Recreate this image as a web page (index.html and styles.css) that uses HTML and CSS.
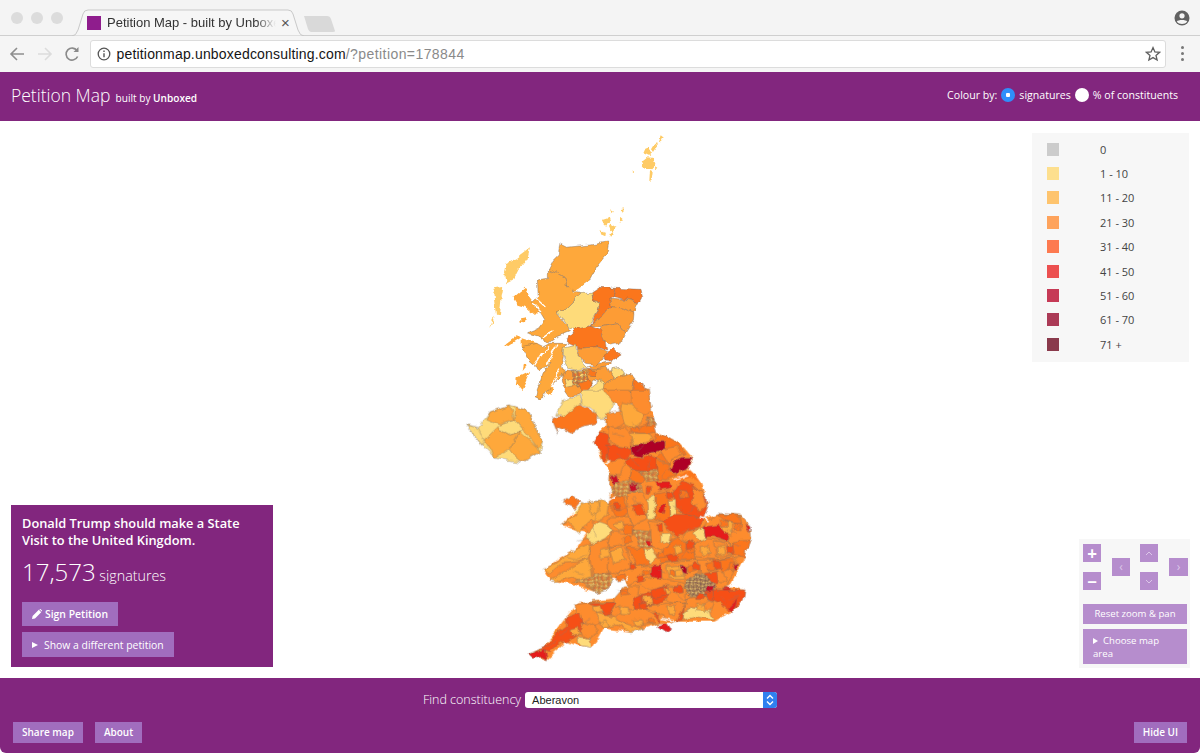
FILE: index.html
```html
<!DOCTYPE html>
<html lang="en">
<head>
<meta charset="utf-8">
<title>Petition Map - built by Unboxed</title>
<link rel="stylesheet" href="styles.css">
</head>
<body>
<div class="page">
  <div class="tabstrip">
    <div class="lights"><i></i><i></i><i></i></div>
    <div class="tab">
      <svg class="tab-bg" viewBox="0 0 232 27" preserveAspectRatio="none"><path d="M0 27 Q4 27 6 21 L11 5 Q12 1 16 1 L216 1 Q220 1 221 5 L226 21 Q228 27 232 27 Z" fill="#f6f6f6" stroke="#c9c9c9"/></svg>
      <span class="favicon"></span>
      <span class="tab-title">Petition Map - built by Unboxed</span>
      <span class="tab-close">×</span>
    </div>
    <svg class="newtab" width="34" height="18" viewBox="0 0 34 18"><path d="M1 1 H24 Q27 1 28 4 L32 16 Q32 17 30 17 H8 Q6 17 5 14 Z" fill="#d9d9d9"/></svg>
    <svg class="profile" width="18" height="18" viewBox="0 0 18 18"><circle cx="9" cy="9" r="7.5" fill="#616161"/><circle cx="9" cy="6.8" r="2.6" fill="#f5f5f5"/><path d="M3.8 12.6 C5 10.6 13 10.6 14.2 12.6 C13 14.4 11 15 9 15 C7 15 5 14.4 3.8 12.6Z" fill="#f5f5f5"/></svg>
  </div>
  <div class="toolbar">
    <svg class="nav-icon" width="18" height="18" viewBox="0 0 18 18"><path d="M16 9H3M9 3L3 9l6 6" fill="none" stroke="#8e8e8e" stroke-width="1.6"/></svg>
    <svg class="nav-icon" width="18" height="18" viewBox="0 0 18 18"><path d="M2 9h13M9 3l6 6-6 6" fill="none" stroke="#dcdcdc" stroke-width="1.6"/></svg>
    <svg class="nav-icon" width="18" height="18" viewBox="0 0 18 18"><path d="M14.6 11.5A6 6 0 1 1 14 5.6" fill="none" stroke="#8a8a8a" stroke-width="1.6"/><path d="M15.5 2v5h-5z" fill="#8a8a8a"/></svg>
    <div class="omnibox">
      <svg width="14" height="14" viewBox="0 0 14 14"><circle cx="7" cy="7" r="5.8" fill="none" stroke="#555" stroke-width="1.3"/><path d="M7 6.2v4M7 3.6v1.4" stroke="#555" stroke-width="1.4"/></svg>
      <span class="url">petitionmap.unboxedconsulting.com<span class="url-rest">/?petition=178844</span></span>
      <svg class="star" width="16" height="16" viewBox="0 0 16 16"><path d="M8 1.6l1.9 4.3 4.7.4-3.6 3.1 1.1 4.6L8 11.6 3.9 14l1.1-4.6L1.4 6.3l4.7-.4z" fill="none" stroke="#5f5f5f" stroke-width="1.3"/></svg>
    </div>
    <div class="dots"><i></i><i></i><i></i></div>
  </div>

  <header class="bar">
    <div class="brand"><span class="brand-name">Petition Map</span> <span class="brand-sub">built by <b>Unboxed</b></span></div>
    <div class="colour-by">
      <span>Colour by:</span>
      <i class="radio on"></i><span>signatures</span>
      <i class="radio"></i><span>% of constituents</span>
    </div>
  </header>

  <main class="stage">
    <svg class="map" viewBox="0 121 1200 557" aria-label="Map of UK constituencies">
      <defs>
        <filter id="rough" x="400" y="121" width="400" height="557" filterUnits="userSpaceOnUse">
          <feTurbulence type="fractalNoise" baseFrequency=".11" numOctaves="3" seed="7" result="n"/>
          <feDisplacementMap in="SourceGraphic" in2="n" scale="6" xChannelSelector="R" yChannelSelector="G"/>
          <feGaussianBlur stdDeviation=".3"/>
        </filter>
        <pattern id="dense" width="15" height="15" patternUnits="userSpaceOnUse">
          <rect width="15" height="15" fill="#e8a040"/>
          <path d="M0 0h7v6H0z" fill="#fbd070"/><path d="M7 7h8v8H7z" fill="#f5742c"/><path d="M10 0h5v4h-5z" fill="#b88a58"/>
          <path d="M0 4l7 2 3-6M7 6l1 9M7 9l8-3M0 11l7-2M3 11l1 4M11 7v8" fill="none" stroke="#7a6a5e" stroke-width="1.1"/>
        </pattern>
        <pattern id="denser" width="11" height="11" patternUnits="userSpaceOnUse">
          <rect width="11" height="11" fill="#c08c50"/>
          <path d="M0 0h5v5H0z" fill="#ecc878"/><path d="M6 6h4v4H6z" fill="#7a3a40"/>
          <path d="M0 5l6 1 2-6M6 6l-1 5M6 8l5-2M0 9l5-1M9 6v5" fill="none" stroke="#6a5f5c" stroke-width="1.1"/>
        </pattern>
      </defs>

      <g filter="url(#rough)">
      <g class="regions" transform="translate(450 130) scale(.33333)">
        <g class="c0 nostroke">
          <path d="M632 16L638 20 630 40 624 38ZM618 38L622 50 612 66 606 58ZM598 52L606 70 598 78 580 70 586 56ZM590 82L612 84 616 105 604 118 580 112 572 96ZM600 120L608 124 604 155 598 152ZM615 112L622 116 616 122Z"/>
          <path d="M462 266L476 262 482 280 466 288 456 278ZM484 284L500 294 488 308 476 298ZM452 298L468 304 466 316 452 310ZM480 306L490 310 484 323 478 318Z"/>
          <path d="M480 238L492 245 485 250ZM508 262L518 270 506 275ZM510 240L522 238 515 248ZM545 118L550 120 546 124Z"/>
          <path d="M240 355L232 385 205 420 190 450 170 460 165 430 170 400 200 385Z"/>
          <path d="M160 470L155 500 150 550 138 555 130 490 135 475Z"/>
          <path d="M135 560L125 582 118 594 125 570Z"/>
        </g>
        <g class="c2 nostroke">
          <path d="M190 500L225 470 240 500 270 540 255 555 225 530 205 525Z"/>
          <path d="M165 645L205 615 210 625 175 648Z"/>
          <path d="M210 565L228 562 225 580 212 578Z"/>
          <path d="M215 625L262 640 272 665 240 672 215 650Z"/>
          <path d="M200 745L240 725 225 760 215 780 198 760Z"/>
          <path d="M222 700L230 705 218 720Z"/>
          <path d="M295 765L310 775 305 800 290 795Z"/>
        </g>
        <path class="c2" d="M330 342L350 352 420 345 476 336 470 372 440 410 415 455 395 470 375 488 350 465 345 445 320 430 295 420 310 390 325 375Z"/>
        <path class="c2" d="M295 420L320 430 345 445 350 465 375 488 395 490 345 540 320 548 355 590 358 605 320 620 295 640 270 620 230 608 265 595 285 570 270 545 245 515 265 500 262 450 295 445Z"/>
        <path class="c1" d="M395 490L425 490 430 510 450 520 445 540 415 590 385 605 355 590 340 565 320 548 345 540Z"/>
        <path class="c4" d="M425 488L450 472 495 475 490 500 480 505 485 530 470 540 450 565 420 590 445 540 450 520 430 510Z"/>
        <path class="c4" d="M495 475L570 478 575 500 565 518 530 508 490 500Z"/>
        <path class="s3a" d="M480 505L530 508 565 518 550 550 520 535 485 530Z"/>
        <path class="s3a" d="M470 540L485 530 520 535 552 550 550 570 525 610 505 580 455 590 420 590 450 565Z"/>
        <path class="s3a" d="M455 590L505 580 525 610 510 640 480 645 465 630 450 600Z"/>
        <path class="c4" d="M355 630L370 600 420 588 450 600 465 630 470 660 440 650 390 655 355 640Z"/>
        <path class="c2" d="M300 640L350 640 340 660 335 690 345 730 330 740 300 770 275 810 255 800 270 760 280 730 300 700 270 720 235 690 215 650 260 640 280 650Z"/>
        <path class="c1" d="M340 655L380 645 385 680 405 705 415 715 380 720 355 715 340 685Z"/>
        <path class="s3a" d="M385 655L440 650 470 665 455 690 440 705 410 700 385 680Z"/>
        <path class="c4" d="M460 672L490 655 512 680 490 692 465 690Z"/>
        <path class="s3a" d="M415 710L450 700 490 695 470 710 440 720 420 715Z"/>
        <path class="c1" d="M490 715L515 712 530 735 490 745 480 730Z"/>
        <path class="s3a" d="M345 720L380 722 420 718 470 712 490 745 465 760 430 750 400 790 360 800 340 770 335 740Z"/>
        <path fill="url(#dense)" class="plain" d="M365 722L410 722 420 760 380 775 365 750Z"/>
        <path class="c4" d="M415 720L440 722 435 740 418 738Z"/>
        <path class="c4" d="M385 760L420 750 425 775 395 785Z"/>
        <path class="c1" d="M345 745L365 750 375 770 350 775Z"/>
        <path class="c1" d="M400 790L450 750 480 770 460 810 410 810Z"/>
        <path class="s3a" d="M465 760L490 745 540 730 555 750 545 790 510 810 460 810Z"/>
        <path class="c4" d="M555 750L585 770 597 800 600 820 540 820 545 790Z"/>
        <path class="gap" d="M250 520L272 542M258 505L285 530M280 622L312 600M272 682L296 650M250 712L275 672M290 700L320 645M375 486L416 456M300 770L332 720"/>
      </g>

      <g class="regions" transform="translate(500 390) scale(.33333)">
        <path class="c1" d="M-30 66L30 45 75 60 90 70 110 120 128 155 120 185 85 205 60 219 30 215 -15 204 -55 165 -99 105 -65 114Z"/>
        <path class="c2" d="M-30 66L30 45 45 90 0 105 -39 90Z"/>
        <path class="c2" d="M45 50L75 60 90 70 110 120 128 155 114 174 66 114 45 90Z"/>
        <path class="c2" d="M60 125L114 174 120 185 85 205 60 219 30 174Z"/>
        <path class="c1" d="M0 105L45 90 66 114 60 125 30 135 -9 114Z"/>
        <path class="c2" d="M-9 114L30 135 60 125 30 174 -15 204 -48 150Z"/>
        <path class="c1" d="M-99 105L-65 114 -48 150 -55 165Z"/>

        <path class="c3 nostroke" d="M320 105L455 60 470 125 540 160 580 205 565 240 600 275 622 340 610 385 655 370 720 375 752 445 730 510 690 590 735 600 730 630 695 668 640 695 540 695 480 700 430 715 395 725 310 715 275 775 240 770 200 755 140 810 85 790 130 770 200 680 235 640 340 625 385 590 370 570 330 565 300 610 220 585 150 570 130 535 225 480 260 430 185 405 250 340 325 345 335 300 330 250 310 215 282 155 300 125Z"/>
        <path class="c4" d="M155 85L180 80 240 40 290 70 285 100 245 110 215 130 170 110 175 135Z"/>
        <path class="c1" d="M170 75L190 30 240 15 245 40 190 80Z"/>
        <path class="c1" d="M245 0L320 0 345 40 320 85 290 85 285 60 245 40Z"/>
        <path class="c3" d="M310 0L390 0 400 40 360 60 345 40Z"/>
        <path class="c3" d="M395 0L445 0 455 60 430 75 400 55 395 40Z"/>
        <path class="c2" d="M365 40L395 45 430 75 420 100 400 115 375 105 360 70Z"/>
        <path class="c3" d="M320 70L365 60 370 100 340 120 320 105Z"/>
        <path class="c5" d="M282 155L300 125 325 135 330 165 320 210 310 215 305 190 290 175Z"/>
        <path class="c3" d="M325 110L345 115 375 110 395 130 395 175 360 170 335 160 325 135Z"/>
        <path class="c4" d="M395 115L440 105 462 100 470 125 445 130 425 130 395 125Z"/>
        <path class="c2" d="M390 130L445 130 455 145 420 165 400 165Z"/>
        <path fill="url(#dense)" class="plain" d="M440 80L465 85 470 105 445 108Z"/>
        <path class="c8" d="M392 170L420 165 455 155 495 155 495 175 470 185 440 190 425 203 395 195Z"/>
        <path class="c4" d="M470 130L500 140 540 165 555 195 520 200 505 225 470 200 495 178 495 155 455 155Z"/>
        <path class="c3" d="M480 180L530 170 548 195 515 205 505 222Z"/>
        <path class="c8" d="M510 240L525 215 545 205 578 205 565 235 545 240 530 252Z"/>
        <path class="c5" d="M320 165L360 170 392 175 395 195 385 205 345 210 325 215Z"/>
        <path class="c5" d="M385 205L425 205 445 195 470 205 470 235 430 245 395 240 375 220Z"/>
        <path class="c4" d="M470 205L505 228 510 245 530 255 500 270 470 265 470 235Z"/>
        <path class="c4 nostroke" d="M530 262L570 240 585 255 600 275 570 262 545 268Z"/>
        <path class="c5" d="M545 272L580 285 620 320 625 345 610 385 580 375 555 370 525 345 520 310Z"/>
        <path class="c3" d="M580 290L610 310 622 345 600 365 575 345Z"/>
        <path class="c3" d="M330 250L360 255 375 220 395 240 390 270 370 285 335 300 328 285Z"/>
        <path class="c4" d="M395 240L430 245 440 265 415 285 390 270Z"/>
        <path class="c7" d="M335 255L350 255 358 285 340 285Z"/>
        <path fill="url(#dense)" class="plain" d="M340 285L370 270 420 280 425 315 385 325 345 315 330 305Z"/>
        <path class="c7" d="M385 285L410 280 412 300 392 305Z"/>
        <path fill="url(#dense)" class="plain" d="M420 245L470 240 475 270 440 275Z"/>
        <path class="c6" d="M465 275L505 275 515 292 480 300Z"/>
        <path class="c4" d="M330 320L370 320 385 370 360 385 328 350Z"/>
        <path class="c4" d="M190 330L215 315 240 335 225 355 205 345Z"/>
        <path class="c1 nostroke" d="M220 365L245 340 250 352 232 372Z"/>
        <path class="c2" d="M185 405L225 375 245 340 265 335 300 330 325 345 320 380 290 395 275 390 250 410 240 430 205 395Z"/>
        <path class="c2" d="M265 335L290 330 300 360 275 375Z"/>
        <path class="c1" d="M262 430L295 395 325 405 335 425 315 445 275 465 262 445Z"/>
        <path class="c2" d="M130 535L175 515 225 480 255 465 270 465 265 505 235 515 185 520 150 550Z"/>
        <path class="c3" d="M270 465L325 445 330 510 325 550 280 560 270 510Z"/>
        <path class="c2" d="M150 570L215 530 265 505 275 560 240 570 215 560 165 575Z"/>
        <path class="c3" d="M325 470L375 465 395 530 355 550 325 545Z"/>
        <path class="c2" d="M330 480L360 475 375 510 340 520Z"/>
        <path fill="url(#dense)" class="plain" d="M220 575L280 555 330 550 340 570 320 600 290 610 250 580Z"/>
        <path class="c3" d="M330 380L390 380 400 430 375 465 325 470 335 425 320 400Z"/>
        <path class="c4" d="M365 405L400 400 400 430 375 430Z"/>
        <path class="c3" d="M380 310L430 305 445 345 440 390 400 405 385 370Z"/>
        <path class="c5" d="M400 345L425 345 440 375 410 378Z"/>
        <path fill="url(#dense)" class="plain" d="M400 420L450 425 455 470 420 475Z"/>
        <path class="c6" d="M440 450L455 450 458 468 442 468Z"/>
        <path class="c1" d="M440 330L465 315 465 385 445 385Z"/>
        <path class="c1" d="M505 335L530 330 530 380 510 385Z"/>
        <path class="c4" d="M465 310L510 300 505 335 510 385 490 395 465 385Z"/>
        <path class="c6" d="M480 345L495 345 490 370 478 368Z"/>
        <path class="c5" d="M490 395L520 370 560 370 610 385 600 410 560 420 530 445 515 420Z"/>
        <path class="c3" d="M625 390L655 370 720 375 748 405 752 445 730 500 695 505 690 450 665 425 615 410Z"/>
        <path class="c4" d="M655 372L720 378 725 405 680 395Z"/>
        <path class="c2" d="M665 395L695 400 695 435 670 425Z"/>
        <path class="c6" d="M612 410L655 405 690 440 685 455 640 440 615 440Z"/>
        <path class="c6" d="M736 402L750 407 750 425Z"/>
        <path class="c4" d="M700 455L750 450 730 505 695 490Z"/>
        <path class="c3" d="M560 420L610 415 620 450 575 465 545 445Z"/>
        <path class="c1" d="M575 425L610 415 620 455 590 445Z"/>
        <path class="c3" d="M615 445L690 455 695 500 650 510 590 500 580 465Z"/>
        <path class="c3" d="M640 455L680 460 690 495 650 500Z"/>
        <path class="c3" d="M450 390L490 395 525 445 490 480 455 470Z"/>
        <path class="c1" d="M485 430L515 430 510 460 485 455Z"/>
        <path class="c4" d="M490 480L530 445 580 465 590 510 530 510 480 520 465 500Z"/>
        <path class="c6" d="M455 525L485 525 485 565 452 560Z"/>
        <path class="c1" d="M430 480L455 475 470 505 450 520 430 495Z"/>
        <path class="c4" d="M375 470L425 475 450 520 410 530 395 495Z"/>
        <path class="c3" d="M395 530L455 525 452 565 420 570 385 585 355 550Z"/>
        <path class="c3" d="M590 510L650 510 695 500 715 525 690 560 685 590 630 600 600 545Z"/>
        <path class="c4" d="M640 510L690 505 710 525 670 545Z"/>
        <path class="c3" d="M625 540L670 545 680 575 640 575Z"/>
        <path class="c7" d="M698 530L716 522 708 542Z"/>
        <path class="c3" d="M485 520L590 510 600 545 560 580 500 570 485 565Z"/>
        <path class="c2" d="M500 530L545 525 555 565 510 565Z"/>
        <path class="c5" d="M610 550L650 545 655 580 620 590Z"/>
        <path fill="url(#denser)" class="plain" d="M560 565L605 550 650 590 630 620 575 620 555 600Z"/>
        <path class="c7" d="M620 590L645 588 640 605 622 605Z"/>
        <path class="c8" d="M540 525L560 535 560 552 545 545Z"/>
        <path class="c6" d="M665 595L690 592 690 610 668 605Z"/>
        <path class="c5" d="M640 600L735 600 730 630 690 665 660 640 640 630Z"/>
        <path class="c6" d="M685 652L712 625 700 665Z"/>
        <path class="c5" d="M610 605L640 600 640 635 618 625Z"/>
        <path class="c3" d="M555 625L610 620 640 640 630 665 575 650 550 670Z"/>
        <path class="c1" d="M550 670L575 650 630 660 640 690 590 680 550 690Z"/>
        <path class="c5" d="M530 650L552 650 548 690 530 695Z"/>
        <path class="c3" d="M490 585L560 595 555 640 520 640 490 625Z"/>
        <path class="c5" d="M420 620L500 585 505 625 470 640 440 650 410 650Z"/>
        <path class="c3" d="M340 625L370 590 420 590 415 625 400 660 370 670 345 650Z"/>
        <path class="c5" d="M400 625L425 615 430 660 405 665Z"/>
        <path class="c3" d="M430 650L500 640 555 640 535 690 515 700 490 680 460 665Z"/>
        <path class="c5" d="M435 680L470 670 485 695 445 702Z"/>
        <path class="c3" d="M345 650L400 660 430 655 470 680 480 700 430 705 410 720 375 700 320 680Z"/>
        <path class="c6" d="M472 708L500 698 512 715 495 725Z"/>
        <path class="c3" d="M225 645L280 635 350 640 320 680 300 695 280 720 250 700 235 680Z"/>
        <path class="c5" d="M262 640L350 640 320 680 290 650Z"/>
        <path class="c2" d="M285 668L340 682 372 700 432 716 395 725 350 705 310 715Z"/>
        <path class="c5" d="M200 680L240 665 250 720 235 730 205 755 180 760 150 785 120 775 95 800 85 790 130 770 160 740 200 710Z"/>
        <path class="c3" d="M250 695L290 710 290 730 270 745 235 730Z"/>
        <path class="c6" d="M85 790L135 778 142 810 125 800 100 805Z"/>
        <path class="c1" d="M232 740L270 745 275 775 245 770 232 755Z"/>

        <path class="c2" d="M345 400l22-5 8 24-26 4zM300 480l25-8 6 30-28 5zM520 470l22-6 8 22-26 6zM600 470l25-4 5 24-26 2zM650 470l20 0 4 20-22 4zM525 540l20-5 6 20-24 2zM470 600l30-8 10 22-32 4zM430 620l25-3 4 25-26 2zM590 640l25 2 4 22-28-2zM360 650l25 2 2 20-28-2zM300 700l20-8 8 20-22 2zM210 720l22-6 6 18-24 4zM500 650l25-2 2 25-22 0zM280 650l22-4 8 20-24 4zM400 690l22-4 8 18-24 2z"/>
        <path class="c4" d="M370 440l20-4 4 22-22 4zM560 470l20-6 8 20-24 4zM620 520l22-4 6 22-24 2zM690 520l14 2-4 20-14-2zM470 490l20-6 6 20-22 2zM560 530l20-6 8 20-22 4zM510 540l14 0 2 16-16 0zM430 540l18-2 2 18-18 2zM350 560l24-6 4 16-24 6zM360 600l24-4 4 20-24 2zM440 690l18-4 4 12-20 2zM660 390l20 4 2 18-18-2zM700 400l22 0 4 22-22-2zM540 300l20 4 4 22-22-2z"/>
        <path class="c5" d="M500 500l25-8 8 18-28 6zM580 520l20 4 0 18-22-2zM520 590l28-2 2 20-28 4zM450 600l40-8 10 25-40 8zM420 640l18-5 6 22-20 2zM590 610l18 0 2 18-20 0zM560 460l18-8 4 20-18 4zM680 470l18-4 4 22-20 2zM410 560l20-4 2 18-22 4zM390 520l15 0 4 18-18 0zM470 400l16 2 2 20-16 0zM500 300l20 4 0 20-20 0zM340 340l16 0 4 18-18 0zM440 290l14 4-2 16-14-2zM640 515l22-2 2 20-22 2z"/>
        <path class="lines" d="M330 350l30 10 20-8M245 410l25 15M230 450l40-5M190 500l40 10 30-15M280 395l5 50M300 330l-15 60M220 545l30 10M335 425l40 5M360 460l20 25M380 350l40-10M400 320l10 20M350 600l40 10M420 580l30 20M520 610l30 20 30-10M600 650l30-20M690 630l30-15M660 620l20 20M620 480l10 20M640 440l40 30M560 480l-15 25M470 540l30 10M540 580l-20 20M300 660l40 20 20-15M240 700l30-15M180 740l30-30M130 770l40-15M400 100l20 20M340 130l30 10M430 170l-20 15M400 210l15 20M350 190l15 15M450 210l-10 25M500 240l-15 20M560 300l-20 30M520 350l30 15M590 340l-20 25M680 420l30 10M720 400l-15 25M725 470l-30-10"/>
        <path class="gap" d="M345 610L385 562M600 383L628 392M522 268L560 258M486 685L530 695M328 330L345 318M684 592L712 588M318 222L332 212"/>
      </g>
      </g>
    </svg>

    <aside class="legend">
      <div class="legend-row"><i class="sw s0"></i><span>0</span></div>
      <div class="legend-row"><i class="sw s1"></i><span>1 - 10</span></div>
      <div class="legend-row"><i class="sw s2"></i><span>11 - 20</span></div>
      <div class="legend-row"><i class="sw s3"></i><span>21 - 30</span></div>
      <div class="legend-row"><i class="sw s4"></i><span>31 - 40</span></div>
      <div class="legend-row"><i class="sw s5"></i><span>41 - 50</span></div>
      <div class="legend-row"><i class="sw s6"></i><span>51 - 60</span></div>
      <div class="legend-row"><i class="sw s7"></i><span>61 - 70</span></div>
      <div class="legend-row"><i class="sw s8"></i><span>71 +</span></div>
    </aside>

    <section class="info">
      <h1 class="info-title">Donald Trump should make a State Visit to the United Kingdom.</h1>
      <p class="count"><span class="count-num">17,573</span> signatures</p>
      <a class="btn btn-sign"><svg width="10" height="10" viewBox="0 0 10 10"><path d="M0 10l.6-3L6.8.8l2.4 2.4L3 9.4zM7.4.2a1 1 0 0 1 1.3 0l1.1 1.1a1 1 0 0 1 0 1.3z" fill="#fff"/></svg> Sign Petition</a>
      <a class="btn btn-show"><i class="tri"></i>Show a different petition</a>
    </section>

    <aside class="controls">
      <div class="pad">
        <div class="pad-col"><a class="key strong">+</a><a class="key strong">−</a></div>
        <div class="pad-col mid"><a class="key">‹</a></div>
        <div class="pad-col"><a class="key"><svg width="8" height="5" viewBox="0 0 8 5"><path d="M1 4l3-3 3 3" fill="none" stroke="#dcc6e8" stroke-width="1"/></svg></a><a class="key"><svg width="8" height="5" viewBox="0 0 8 5"><path d="M1 1l3 3 3-3" fill="none" stroke="#dcc6e8" stroke-width="1"/></svg></a></div>
        <div class="pad-col mid"><a class="key wide">›</a></div>
      </div>
      <a class="ctl ctl-reset">Reset zoom &amp; pan</a>
      <a class="ctl ctl-area"><i class="tri"></i>Choose map area</a>
    </aside>
  </main>

  <footer class="foot">
    <div class="find">
      <span>Find constituency</span>
      <div class="select"><span>Aberavon</span>
        <i class="stepper"><svg width="8" height="12" viewBox="0 0 8 12"><path d="M1 4.5l3-3 3 3M1 7.5l3 3 3-3" fill="none" stroke="#fff" stroke-width="1.4"/></svg></i>
      </div>
    </div>
    <div class="foot-row">
      <div class="foot-left"><a class="fbtn">Share map</a><a class="fbtn">About</a></div>
      <a class="fbtn">Hide UI</a>
    </div>
  </footer>
</div>
</body>
</html>
```

FILE: styles.css
```css
* { box-sizing: border-box; }
html, body { margin: 0; height: 100%; background: #fff; }
body { font-family: "Open Sans", "Liberation Sans", sans-serif; overflow: hidden; }
.page { width: 1200px; height: 753px; display: flex; flex-direction: column; }

/* browser chrome */
.tabstrip { height: 36px; flex: none; display: flex; align-items: flex-end; background: #f4f4f4; border-bottom: 1px solid #cfcfcf; padding: 0 8px 0 11px; position: relative; }
.lights { display: flex; gap: 8px; align-self: flex-start; margin-top: 12px; width: 61px; }
.lights i { width: 12px; height: 12px; border-radius: 50%; background: #dcdcdc; }
.tab { position: relative; width: 232px; height: 27px; margin-bottom: -1px; display: flex; align-items: center; padding: 0 0 0 15px; font: 13px "Liberation Sans", Arial, sans-serif; color: #333; }
.tab-bg { position: absolute; inset: 0; width: 100%; height: 100%; }
.favicon { position: relative; width: 14px; height: 14px; background: #8f1d8d; flex: none; }
.tab-title { position: relative; margin-left: 6px; width: 169px; white-space: nowrap; overflow: hidden; -webkit-mask-image: linear-gradient(90deg, #000 88%, transparent); mask-image: linear-gradient(90deg, #000 88%, transparent); }
.tab-close { position: relative; margin-left: 5px; font-size: 15px; color: #555; }
.newtab { align-self: flex-start; margin: 15px 0 0 -1px; }
.profile { margin-left: auto; align-self: flex-start; margin-top: 9px; position: relative; left: -1px; }

.toolbar { height: 36px; flex: none; display: flex; align-items: center; background: #f5f5f5; padding: 0 0 1px 8px; gap: 9.5px; }
.nav-icon { flex: none; }
.omnibox { width: 1076px; height: 28px; margin-left: -.5px; background: #fff; border: 1px solid #dcdcdc; border-radius: 3px; display: flex; align-items: center; padding: 0 4px 0 6px; gap: 5.5px; font: 14px "Liberation Sans", Arial, sans-serif; }
.url { color: #151515; letter-spacing: .18px; }
.url-rest { color: #8a8a8a; letter-spacing: .42px; }
.star { margin-left: auto; }
.dots { display: flex; flex-direction: column; gap: 3px; margin-left: 5px; }
.dots i { width: 3px; height: 3px; border-radius: 50%; background: #777; }

/* app bar */
.bar { height: 49px; flex: none; background: #82267e; color: #fff; display: flex; align-items: center; justify-content: space-between; padding: 0 22px 3px 11px; }
.brand-name { font-size: 17.5px; font-weight: 300; }
.brand-sub { font-size: 10.1px; font-weight: 400; margin-left: 1px; }
.brand-sub b { font-weight: 600; }
.colour-by { display: flex; align-items: center; font-size: 10.6px; }
.radio { width: 14px; height: 14px; border-radius: 50%; background: #fff; margin: 0 4px; }
.radio.on { background: radial-gradient(circle, #fff 0 2px, #2f8ffb 2.5px); }

/* stage */
.stage { flex: 1; position: relative; overflow: hidden; }
.map { display: block; width: 1200px; height: 557px; }
.regions path { stroke: #7a6a5e; stroke-width: 1.3; stroke-linejoin: round; }
.regions .nostroke, .nostroke path { stroke: none; }
.regions .lines { fill: none; stroke: #8a7565; stroke-width: 1.2; }
.regions .gap { fill: none; stroke: #fff; stroke-width: 4; stroke-linecap: round; }
.c0 { fill: #fecb66; }
.c1 { fill: #fedb7a; }
.c2 { fill: #fea83a; }
.s3a { fill: #fd9c36; }
.c3 { fill: #fd8c2d; }
.c4 { fill: #fb761f; }
.c5 { fill: #f65018; }
.c6 { fill: #e61c1a; }
.c7 { fill: #cc0d26; }
.c8 { fill: #ae0026; }

.legend { position: absolute; left: 1032px; top: 12px; width: 157px; height: 229px; background: #f7f7f7; padding: 4px 0 0 15px; }
.legend-row { height: 24.4px; display: flex; align-items: center; font-size: 11px; color: #444; }
.sw { width: 12px; height: 13px; margin-right: 41px; }
.s0 { background: #cccccc; }
.s1 { background: #fddf8e; }
.s2 { background: #fec46e; }
.s3 { background: #fea35c; }
.s4 { background: #fd7a50; }
.s5 { background: #ec5050; }
.s6 { background: #c63a56; }
.s7 { background: #ab3a56; }
.s8 { background: #8a3a4c; }

.info { position: absolute; left: 11px; bottom: 11px; width: 262px; height: 162px; background: #82267e; color: #fff; padding: 10px 10px 0 11px; }
.info-title { margin: 0; font-size: 12.8px; line-height: 17px; font-weight: 600; }
.count { margin: 6px 0 0; font-size: 14.3px; font-weight: 300; line-height: 33px; height: 33px; }
.count-num { font-size: 24px; }
.btn { display: flex; align-items: center; width: max-content; height: 24px; padding: 0 10px; background: #a16dbe; color: #fff; font-size: 10.4px; }
.btn svg { margin-right: 3px; }
.btn-sign { margin-top: 14px; font-weight: 600; }
.btn-show { margin-top: 6px; height: 25px; }
.tri { display: inline-block; width: 0; height: 0; border-left: 6px solid #fff; border-top: 3.5px solid transparent; border-bottom: 3.5px solid transparent; margin-right: 6px; }

.controls { position: absolute; left: 1079px; top: 418px; width: 111px; height: 129px; background: #f7f7f7; padding: 5px 3px 0 4px; }
.pad { display: flex; height: 46px; }
.pad-col { display: flex; flex-direction: column; justify-content: space-between; width: 18px; margin-right: 11px; }
.pad-col.mid { justify-content: center; margin-right: 10px; }
.key { width: 18px; height: 18px; background: #b68dcd; color: #dcc6e8; display: flex; align-items: center; justify-content: center; font-size: 12px; line-height: 1; }
.key.strong { color: #fff; font-size: 17px; font-weight: 700; }
.key.wide { width: 19px; }
.ctl { display: block; background: #b68dcd; color: #fff; font-size: 9.6px; width: 104px; }
.ctl-reset { margin-top: 14px; height: 20px; line-height: 20px; text-align: center; }
.ctl-area { margin-top: 5px; height: 35px; line-height: 13px; padding: 5px 10px; }
.ctl-area .tri { border-left-width: 5px; border-top-width: 3px; border-bottom-width: 3px; margin-right: 5px; }

/* footer */
.foot { height: 75px; flex: none; background: #82267e; color: #fff; border-radius: 0 0 6px 6px; padding: 13px 13px 10px; display: flex; flex-direction: column; justify-content: space-between; }
.find { display: flex; justify-content: center; align-items: center; gap: 4px; font-size: 12.5px; font-weight: 300; }
.select { width: 252px; height: 16px; background: #fff; border-radius: 3px; color: #222; font: 11px "Liberation Sans", Arial, sans-serif; display: flex; align-items: center; justify-content: space-between; padding-left: 7px; overflow: hidden; }
.stepper { width: 14px; height: 16px; background: #2f80f0; display: flex; align-items: center; justify-content: center; }
.foot-row { display: flex; justify-content: space-between; align-items: center; }
.foot-left { display: flex; gap: 12px; }
.fbtn { height: 21px; padding: 0 9px; line-height: 21px; background: #a16dbe; color: #fff; font-size: 10px; font-weight: 600; }
```
